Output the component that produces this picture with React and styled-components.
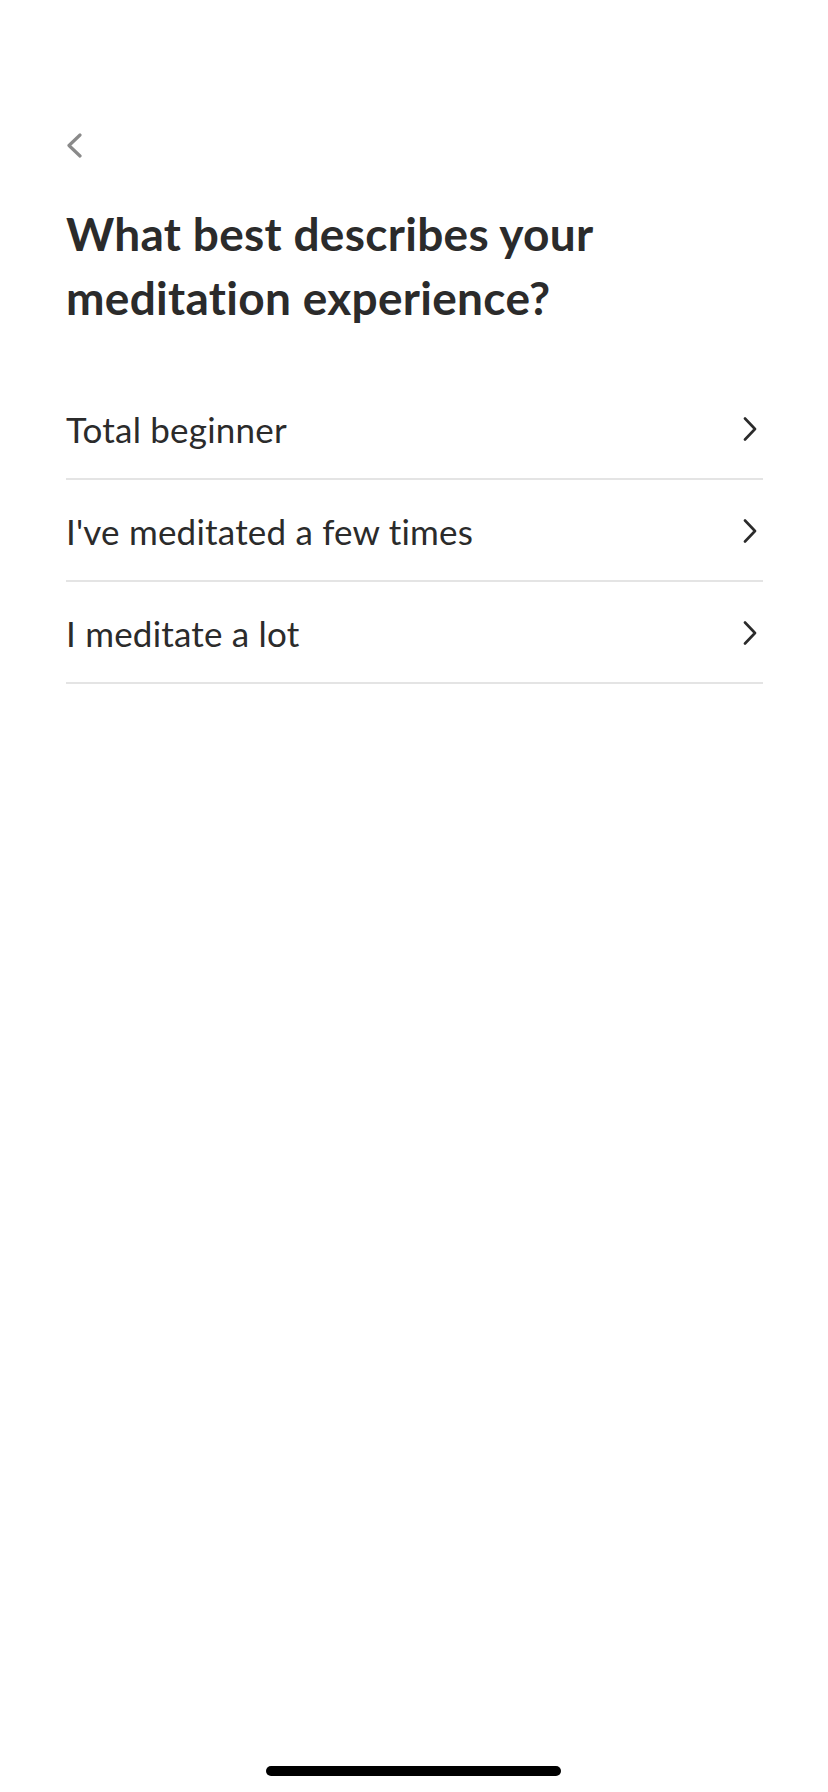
import React from "react";
import styled, { createGlobalStyle } from "styled-components";

const GlobalStyle = createGlobalStyle`
  html, body {
    margin: 0;
    padding: 0;
    background: #ffffff;
  }
  * {
    box-sizing: border-box;
  }
`;

const options = [
  "Total beginner",
  "I've meditated a few times",
  "I meditate a lot",
];

const Page = styled.div`
  width: 828px;
  min-height: 1792px;
  display: flex;
  flex-direction: column;
  padding: 133px 65px 16px 66px;
  font-family: Lato, "Noto Sans", sans-serif;
  color: #2b2b2b;
`;

const BackButton = styled.button`
  width: 16px;
  height: 25px;
  padding: 0;
  border: none;
  background: none;
  display: flex;
  align-items: center;
  justify-content: flex-start;
  cursor: pointer;
`;

const Title = styled.h1`
  margin: 44px 0 0 0;
  font-size: 46px;
  font-weight: 700;
  line-height: 64px;
  letter-spacing: 0.3px;
  color: #2b2b2b;
`;

const List = styled.ul`
  list-style: none;
  margin: 48px 0 0 0;
  padding: 0;
`;

const Row = styled.li`
  height: 102px;
  display: flex;
  align-items: center;
  justify-content: space-between;
  border-bottom: 2px solid #e4e4e4;
  padding-top: 1px;
  cursor: pointer;
`;

const Label = styled.span`
  font-size: 35px;
  font-weight: 400;
  letter-spacing: 0.2px;
  color: #2b2b2b;
`;

const Arrow = styled.span`
  display: flex;
  margin-right: 6px;
`;

const HomeIndicator = styled.div`
  margin: auto auto 0 auto;
  width: 295px;
  height: 10px;
  border-radius: 5px;
  background: #000000;
  transform: translateX(-1px);
`;

const ChevronLeft = () => (
  <svg width="16" height="25" viewBox="0 0 16 25" fill="none">
    <path
      d="M14 2 L3 12.5 L14 23"
      stroke="#8a8a8a"
      strokeWidth="3.2"
      strokeLinecap="round"
      strokeLinejoin="round"
    />
  </svg>
);

const ChevronRight = () => (
  <svg width="14" height="24" viewBox="0 0 14 24" fill="none">
    <path
      d="M2 1.5 L12 12 L2 22.5"
      stroke="#2b2b2b"
      strokeWidth="2.6"
      strokeLinecap="round"
      strokeLinejoin="round"
    />
  </svg>
);

export default function App() {
  return (
    <>
      <GlobalStyle />
      <Page>
        <BackButton aria-label="Back">
          <ChevronLeft />
        </BackButton>
        <Title>
          What best describes your
          <br />
          meditation experience?
        </Title>
        <List>
          {options.map((text) => (
            <Row key={text}>
              <Label>{text}</Label>
              <Arrow>
                <ChevronRight />
              </Arrow>
            </Row>
          ))}
        </List>
        <HomeIndicator />
      </Page>
    </>
  );
}
